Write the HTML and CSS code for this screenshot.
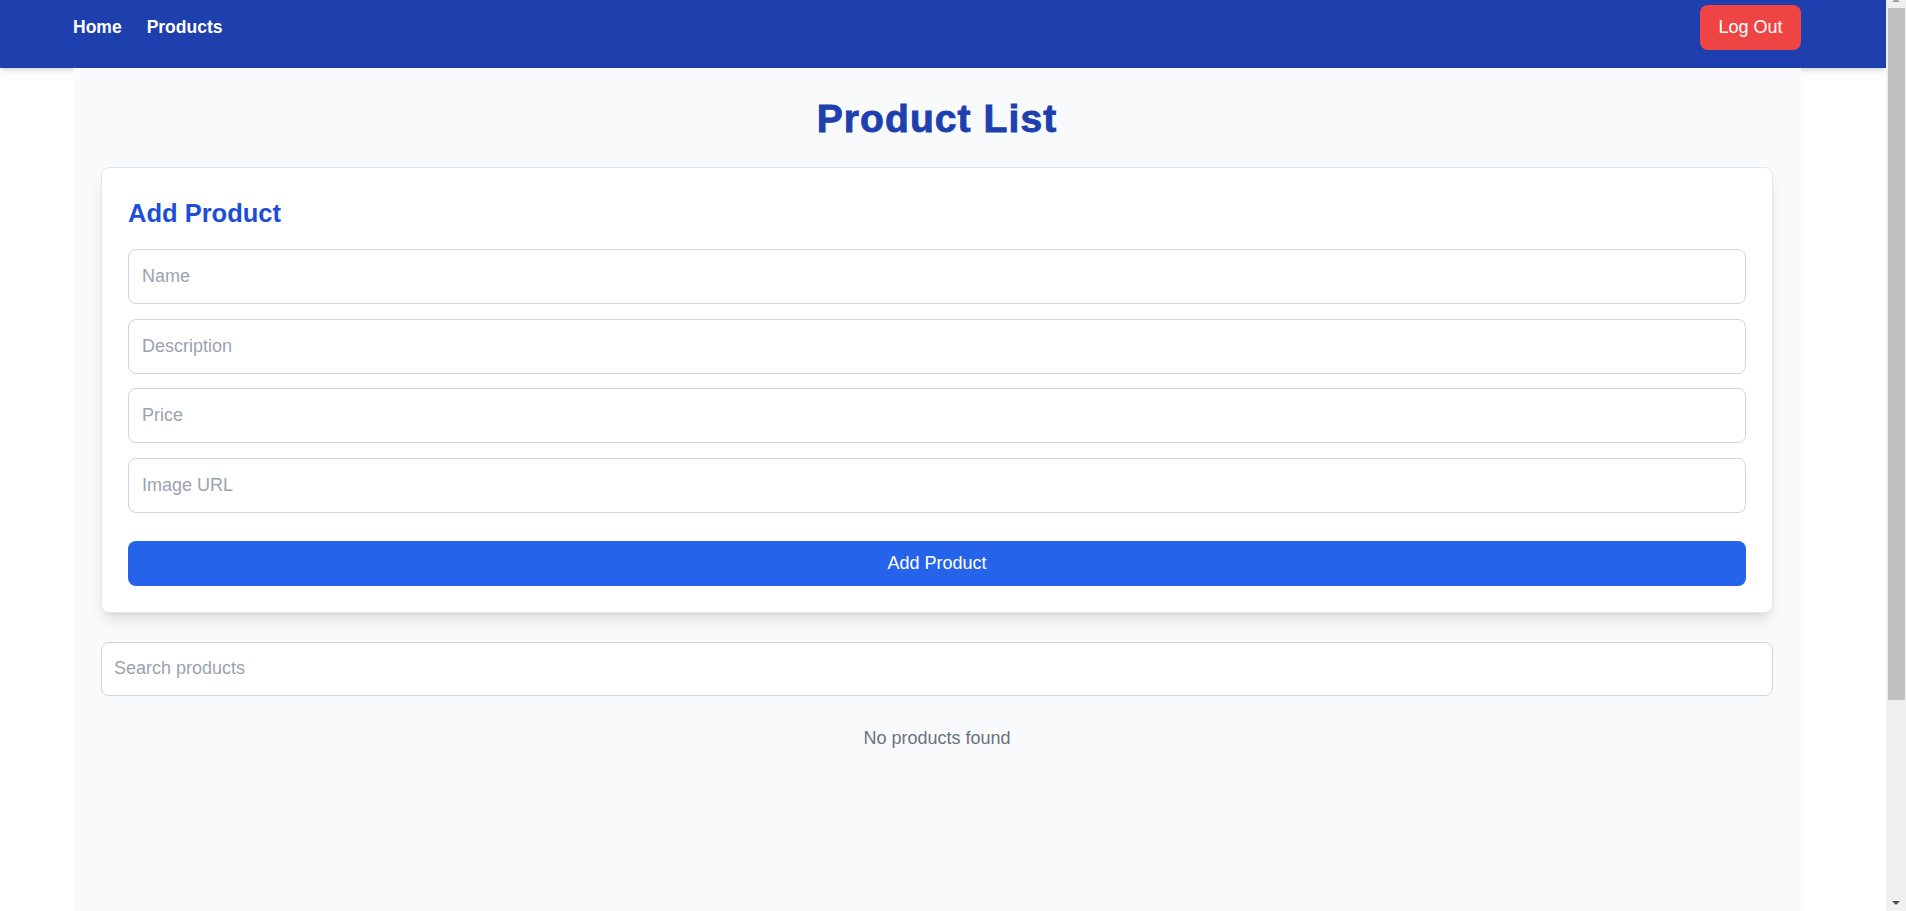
FILE: index.html
```html
<!DOCTYPE html>
<html lang="en">
<head>
<meta charset="utf-8">
<title>Product List</title>
<link rel="stylesheet" href="styles.css">
</head>
<body>
<nav class="navbar">
  <div class="nav-inner">
    <div class="nav-links">
      <a class="nav-link" href="#">Home</a>
      <a class="nav-link" href="#">Products</a>
    </div>
    <button class="logout-btn" type="button">Log Out</button>
  </div>
</nav>
<main class="page">
  <h1 class="page-title">Product List</h1>
  <section class="card">
    <h2 class="card-title">Add Product</h2>
    <form class="product-form">
      <input class="field" type="text" placeholder="Name">
      <input class="field" type="text" placeholder="Description">
      <input class="field" type="text" placeholder="Price">
      <input class="field" type="text" placeholder="Image URL">
      <button class="submit-btn" type="button">Add Product</button>
    </form>
  </section>
  <input class="search" type="text" placeholder="Search products">
  <p class="empty">No products found</p>
</main>
<div class="scrollbar" aria-hidden="true">
  <span class="sb-arrow sb-up"></span>
  <span class="sb-thumb"></span>
  <span class="sb-arrow sb-down"></span>
</div>
</body>
</html>
```
FILE: styles.css
```css
html, body {
  margin: 0;
  padding: 0;
  background: #ffffff;
  font-family: "Liberation Sans", Arial, sans-serif;
}

body {
  margin-right: 20px;
}

.navbar {
  height: 68px;
  background: #1e40af;
  box-shadow: 0 4px 6px -1px rgba(0,0,0,0.12), 0 2px 4px -2px rgba(0,0,0,0.1);
}

.nav-inner {
  margin-left: 73px;
  width: 1728px;
  padding-top: 5px;
  height: 45px;
  display: flex;
  align-items: center;
  justify-content: space-between;
}

.nav-links {
  display: flex;
  gap: 25px;
}

.nav-link {
  color: #ffffff;
  text-decoration: none;
  font-weight: 700;
  font-size: 17.5px;
}

.logout-btn {
  width: 101px;
  height: 45px;
  border: none;
  border-radius: 8px;
  background: #ef4444;
  color: #ffffff;
  font-family: inherit;
  font-size: 18px;
  padding: 0;
}

.page {
  margin-left: 73px;
  width: 1728px;
  box-sizing: border-box;
  min-height: 1100px;
  background: #f9fafb;
  padding: 29px 28px 40px;
}

.page-title {
  margin: 0 0 26px;
  text-align: center;
  font-size: 39px;
  line-height: 44px;
  font-weight: 700;
  letter-spacing: 1.1px;
  -webkit-text-stroke: 0.9px #1e40af;
  color: #1e40af;
}

.card {
  background: #ffffff;
  border: 1px solid #e5e7eb;
  border-radius: 8px;
  padding: 26px;
  box-shadow: 0 10px 15px -3px rgba(0,0,0,0.1), 0 4px 6px -4px rgba(0,0,0,0.1);
}

.card-title {
  margin: 3px 0 20px;
  font-size: 25.5px;
  line-height: 32px;
  font-weight: 700;
  color: #1d4ed8;
}

.product-form {
  display: flex;
  flex-direction: column;
  gap: 14.5px;
}

.field, .search {
  box-sizing: border-box;
  width: 100%;
  height: 55px;
  border: 1px solid #d1d5db;
  border-radius: 8px;
  background: #ffffff;
  padding: 0 13px;
  font-family: inherit;
  font-size: 18px;
  color: #111827;
  outline: none;
}

.field::placeholder, .search::placeholder {
  color: #9ca3af;
}

.submit-btn {
  margin-top: 13.5px;
  height: 45px;
  border: none;
  border-radius: 8px;
  background: #2563eb;
  color: #ffffff;
  font-family: inherit;
  font-size: 18px;
}

.search {
  display: block;
  margin-top: 29px;
  height: 54px;
  padding: 0 12px;
}

.empty {
  margin: 28px 0 0;
  text-align: center;
  font-size: 18px;
  line-height: 28px;
  color: #6b7280;
}

/* decorative replica of the browser's vertical scrollbar */
.scrollbar {
  position: fixed;
  top: 0;
  right: 0;
  width: 20px;
  height: 100vh;
  background: #f0f0f0;
}

.sb-thumb {
  position: absolute;
  top: 8px;
  left: 2px;
  width: 17px;
  height: 692px;
  background: #c1c1c1;
}

.sb-arrow {
  position: absolute;
  left: 6px;
  width: 0;
  height: 0;
  border-left: 4px solid transparent;
  border-right: 4px solid transparent;
}

.sb-up {
  top: -2px;
  border-bottom: 4px solid #a3a3a3;
}

.sb-down {
  bottom: 6px;
  border-top: 4px solid #505050;
}
```
